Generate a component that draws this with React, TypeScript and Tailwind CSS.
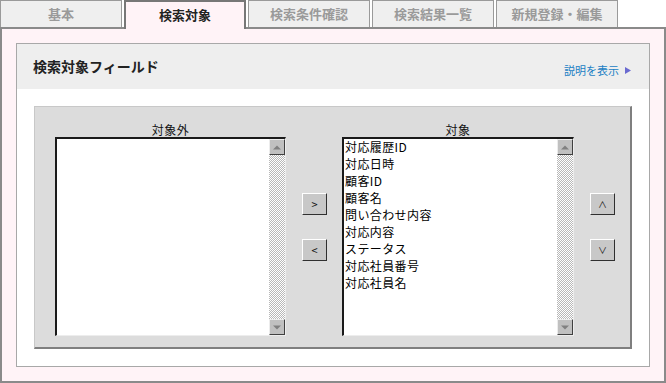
import React from 'react';

const tabs = ['基本', '検索対象', '検索条件確認', '検索結果一覧', '新規登録・編集'];
const activeTab = '検索対象';

const selected = [
  '対応履歴ID',
  '対応日時',
  '顧客ID',
  '顧客名',
  '問い合わせ内容',
  '対応内容',
  'ステータス',
  '対応社員番号',
  '対応社員名',
];

function ScrollButton({ up }: { up?: boolean }) {
  return (
    <div className="h-[16px] w-[16px] shrink-0 bg-[#c0c0c0] border border-t-[#ececec] border-l-[#ececec] border-b-[#404040] border-r-[#404040] flex items-center justify-center">
      <svg width="8" height="5" viewBox="0 0 8 5">
        {up ? (
          <polygon points="0,4.5 4,0.5 8,4.5" fill="#808080" />
        ) : (
          <polygon points="0,0.5 8,0.5 4,4.5" fill="#808080" />
        )}
      </svg>
    </div>
  );
}

function ListBox({ items, width }: { items: string[]; width: string }) {
  return (
    <div className={`${width} h-[199px] flex border-t-2 border-l-2 border-t-[#1a1a1a] border-l-[#1a1a1a] border-b border-r border-b-[#ededed] border-r-[#ededed] bg-white`}>
      <div className="flex-1 overflow-hidden pl-[1px] -mt-[1px]">
        {items.map((item) => (
          <div key={item} className="text-[12px] leading-[17px] tracking-[0.4px] text-black whitespace-nowrap">
            {item}
          </div>
        ))}
      </div>
      <div className="w-[16px] flex flex-col">
        <ScrollButton up />
        <div className="flex-1 bg-[image:repeating-conic-gradient(#b8b8b8_0%_25%,#ffffff_0%_50%)] bg-[length:2px_2px]" />
        <ScrollButton />
      </div>
    </div>
  );
}

function MoveButton({ label, small }: { label: string; small?: boolean }) {
  return (
    <div
      className={`w-[25px] h-[22px] bg-[#c8c8c8] border border-t-white border-l-white border-b-[#303030] border-r-[#303030] flex items-center justify-center leading-none text-[#111] ${
        small ? 'text-[9px]' : 'text-[11px]'
      }`}
    >
      {label}
    </div>
  );
}

export default function App() {
  return (
    <div className="w-[666px] h-[383px] bg-white font-['Noto_Sans_CJK_JP','Noto_Sans',sans-serif] overflow-hidden">
      {/* Tabs */}
      <div className="flex items-start gap-[2px] h-[27px]">
        {tabs.map((tab) =>
          tab === activeTab ? (
            <div
              key={tab}
              className="relative z-10 w-[122px] h-[29px] bg-[#fff3f7] border-2 border-b-0 border-[#777777] flex items-center justify-center pb-[2px] text-[13px] font-bold text-[#222]"
            >
              {tab}
            </div>
          ) : (
            <div
              key={tab}
              className="w-[122px] h-[27px] bg-[#efefef] border border-b-0 border-[#9a9a9a] flex items-center justify-center text-[13px] font-bold text-[#9a9a9a]"
            >
              {tab}
            </div>
          )
        )}
      </div>

      {/* Main panel */}
      <div className="h-[356px] bg-[#fff3f7] border-2 border-[#8a8a8a] p-[14px]">
        <div className="h-full border border-[#a8a8a8] bg-white flex flex-col">
          <div className="h-[45px] shrink-0 bg-[#eeeeee] flex items-start justify-between pl-[16px] pr-[18px] pt-[13px]">
            <h2 className="text-[14px] leading-[18px] font-bold text-[#222]">検索対象フィールド</h2>
            <a className="mt-[7px] flex items-center gap-[6px] text-[11px] leading-[13px] text-[#1a80c4] cursor-pointer">
              説明を表示
              <svg width="6" height="7" viewBox="0 0 6 7">
                <polygon points="0,0 6,3.5 0,7" fill="#6a6ad0" />
              </svg>
            </a>
          </div>

          <div className="flex-1 p-[17px]">
            <div className="h-full bg-[#dcdcdc] border-t border-l border-t-[#c8c8c8] border-l-[#c8c8c8] border-r-2 border-b-2 border-r-[#7f7f7f] border-b-[#7f7f7f] pt-[16px] pl-[20px] flex items-start">
              <div className="w-[231px] flex flex-col">
                <div className="h-[14px] text-center text-[12px] leading-[14px] tracking-[0.5px] text-[#111]">対象外</div>
                <ListBox items={[]} width="w-[231px]" />
              </div>

              <div className="ml-[16px] pt-[70px] flex flex-col gap-[24px]">
                <MoveButton label=">" />
                <MoveButton label="<" />
              </div>

              <div className="ml-[15px] w-[232px] flex flex-col">
                <div className="h-[14px] text-center text-[12px] leading-[14px] tracking-[0.5px] text-[#111]">対象</div>
                <ListBox items={selected} width="w-[232px]" />
              </div>

              <div className="ml-[16px] pt-[70px] flex flex-col gap-[24px]">
                <MoveButton label="∧" small />
                <MoveButton label="∨" small />
              </div>
            </div>
          </div>
        </div>
      </div>
    </div>
  );
}
